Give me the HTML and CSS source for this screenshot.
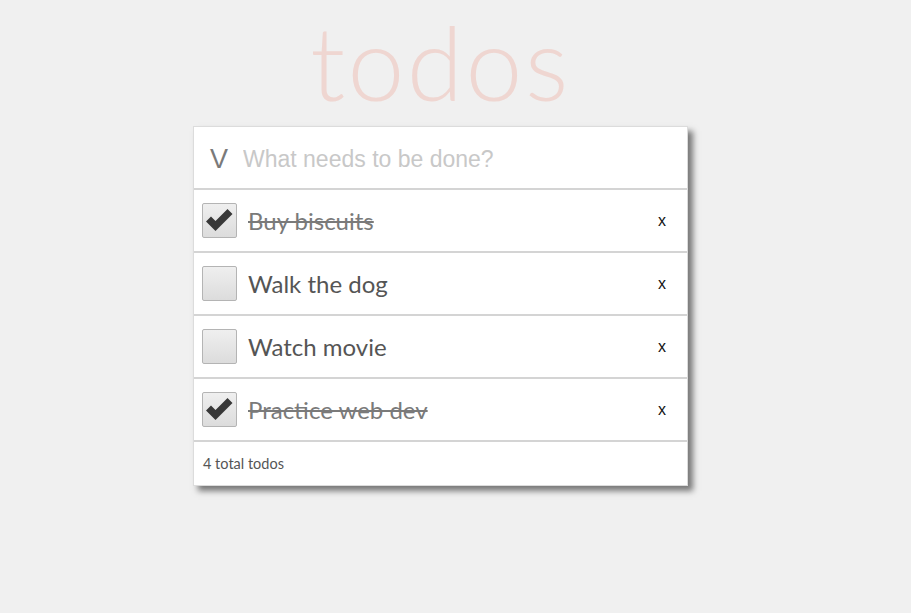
FILE: index.html
```html
<!DOCTYPE html>
<html>
<head>
<meta charset="utf-8">
<link rel="stylesheet" href="styles.css">
</head>
<body>
<div class="app">
  <h1 class="title">todos</h1>
  <div class="card">
    <div class="new-row">
      <span class="toggle-all">V</span>
      <input class="new-todo" type="text" placeholder="What needs to be done?">
    </div>
    <ul class="list">
      <li class="item done">
        <span class="box"><svg viewBox="0 0 35 35" width="35" height="35"><path d="M4 18.5 L9 13.5 L13.5 18 L25.5 6 L30.5 11 L13.5 28 Z" fill="#383838"/></svg></span>
        <span class="label">Buy biscuits</span>
        <span class="del">x</span>
      </li>
      <li class="item">
        <span class="box"></span>
        <span class="label">Walk the dog</span>
        <span class="del">x</span>
      </li>
      <li class="item">
        <span class="box"></span>
        <span class="label">Watch movie</span>
        <span class="del">x</span>
      </li>
      <li class="item done">
        <span class="box"><svg viewBox="0 0 35 35" width="35" height="35"><path d="M4 18.5 L9 13.5 L13.5 18 L25.5 6 L30.5 11 L13.5 28 Z" fill="#383838"/></svg></span>
        <span class="label">Practice web dev</span>
        <span class="del">x</span>
      </li>
    </ul>
    <div class="footer">4 total todos</div>
  </div>
</div>
</body>
</html>
```

FILE: styles.css
```css
html, body {
  margin: 0;
  padding: 0;
  background: #f0f0f0;
}
body {
  min-height: 613px;
}
.app {
  width: 495px;
  margin-left: 193px;
  padding-bottom: 60px;
  font-family: "Lato", "Noto Sans", sans-serif;
}
.title {
  margin: 0;
  height: 126px;
  padding: 0;
  text-align: center;
  font-family: "Lato", sans-serif;
  font-weight: 300;
  font-size: 102px;
  line-height: 123px;
  color: #efd6d1;
  letter-spacing: 2.5px;
}
.card {
  background: #fff;
  border: 1px solid #dcdcdc;
  box-shadow: 5px 5px 6px rgba(0,0,0,0.5);
}
.new-row {
  display: flex;
  align-items: center;
  height: 58px;
  padding-top: 3px;
  border-bottom: 2px solid #d4d4d4;
}
.toggle-all {
  width: 49px;
  box-sizing: border-box;
  padding-left: 16px;
  font-family: "Liberation Sans", Arial, sans-serif;
  font-size: 27px;
  color: #7a7a7a;
}
.new-todo {
  flex: 1;
  border: 0;
  outline: none;
  padding: 0;
  font-family: "Liberation Sans", Arial, sans-serif;
  font-size: 23px;
  color: #333;
  background: transparent;
}
.new-todo::placeholder {
  color: #c8c8c8;
}
.list {
  list-style: none;
  margin: 0;
  padding: 0;
}
.item {
  display: flex;
  align-items: center;
  height: 61px;
  border-bottom: 2px solid #d4d4d4;
  padding-left: 8px;
  padding-right: 21px;
}
.box {
  width: 33px;
  height: 33px;
  border: 1px solid #b4b4b4;
  border-radius: 2px;
  background: linear-gradient(#efefef, #dcdcdc);
  flex: none;
  position: relative;
}
.box svg {
  position: absolute;
  left: -1px;
  top: -1px;
}
.label {
  flex: 1;
  margin-left: 11px;
  font-size: 24px;
  font-weight: 400;
  color: #555;
}
.done .label {
  color: #7a7a7a;
  text-decoration: line-through;
}
.del {
  font-family: "Liberation Sans", Arial, sans-serif;
  font-size: 16px;
  color: #111;
}
.footer {
  height: 43px;
  display: flex;
  align-items: center;
  padding-left: 9px;
  font-size: 14.5px;
  color: #555;
}
```
